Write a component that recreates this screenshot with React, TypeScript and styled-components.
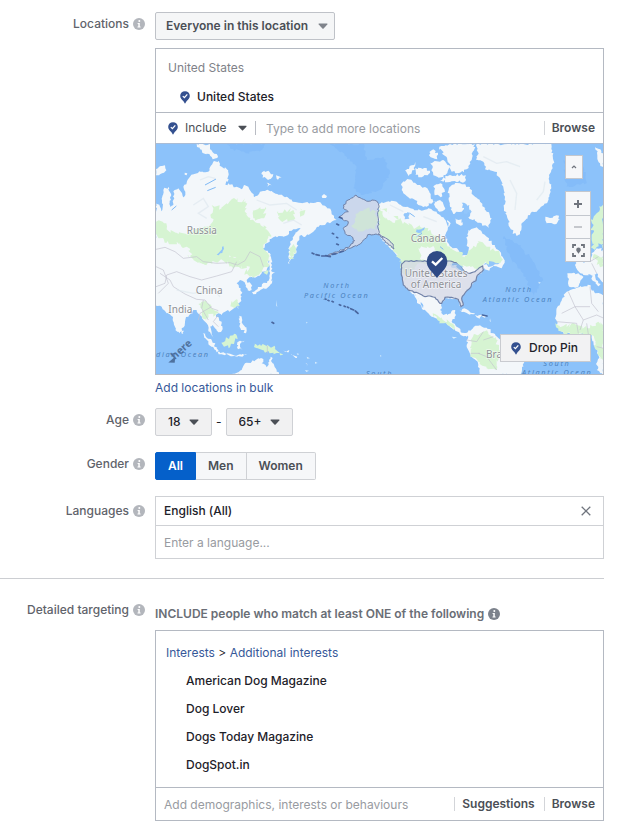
import React from "react";
import styled, { createGlobalStyle, css } from "styled-components";

const GlobalStyle = createGlobalStyle`
  *, *::before, *::after { box-sizing: border-box; }
  body { margin: 0; background: #fff; }
  body, button, input, select {
    font-family: Inter, "Liberation Sans", sans-serif;
    font-size: 12px;
    line-height: 16px;
  }
`;

/* ---------- layout ---------- */

const Page = styled.main`
  padding: 12px 18px 8px 0;
  color: #1d2129;
`;

const Row = styled.section<{ $gap?: number }>`
  display: grid;
  grid-template-columns: 145px minmax(0, 1fr);
  column-gap: 10px;
  margin-bottom: ${(p) => p.$gap ?? 16}px;
`;

const RowLabel = styled.div<{ $tall?: boolean }>`
  display: flex;
  align-items: center;
  justify-content: flex-end;
  gap: 4px;
  height: ${(p) => (p.$tall ? 30 : 24)}px;
  color: #5f636b;
  font-weight: 500;
`;

const Field = styled.div`
  min-width: 0;
`;

const Inline = styled.div`
  display: flex;
  align-items: center;
  gap: 4px;
`;

const Rule = styled.hr`
  margin: 0 0 19px;
  border: 0;
  border-top: 1px solid #ccced2;
`;

const Box = styled.div<{ $soft?: boolean }>`
  border: 1px solid ${(p) => (p.$soft ? "#cfd1d5" : "#b4b9c2")};
  background: #fff;
`;

/* ---------- controls ---------- */

const SelectWrap = styled.span<{ $kind: "tinted" | "grey" | "bare" }>`
  display: inline-grid;
  align-items: center;
  color: #4b4f56;
  select,
  svg {
    grid-area: 1 / 1;
  }
  svg {
    justify-self: end;
    pointer-events: none;
  }
  select {
    appearance: none;
    width: 100%;
    height: 28px;
    margin: 0;
    border: 1px solid transparent;
    border-radius: 2px;
    background: transparent;
    color: inherit;
    cursor: pointer;
  }
  ${(p) =>
    p.$kind === "tinted" &&
    css`
      width: 180px;
      select { background: #f5f6f7; border-color: #bfc2c8; font-weight: 600; padding: 0 10px; }
      svg { margin-right: 7px; color: #7f838b; }
    `}
  ${(p) =>
    p.$kind === "grey" &&
    css`
      color: #1d2129;
      select { background: #f1f1f2; border-color: #cfd1d5; font-weight: 500; padding: 0 30px 0 12px; }
      svg { margin-right: 13px; color: #4b4f56; }
    `}
  ${(p) =>
    p.$kind === "bare" &&
    css`
      width: 62px;
      select { padding: 0; border: 0; }
      svg { color: #4b4f56; }
    `}
`;

const TextLink = styled.a`
  color: #365899;
  text-decoration: none;
`;

const BulkRow = styled.div`
  margin-top: 5px;
`;

const TextInput = styled.input`
  flex: 1;
  min-width: 0;
  height: 30px;
  padding: 0;
  border: 0;
  outline: 0;
  background: transparent;
  color: #1d2129;
  &::placeholder { color: #989ba1; opacity: 1; }
`;

const InputBar = styled.div<{ $inset: number; $height: number }>`
  display: flex;
  align-items: center;
  height: ${(p) => p.$height}px;
  padding: 0 8px 0 ${(p) => p.$inset}px;
  border-top: 1px solid #b4b9c2;
`;

const Separator = styled.span`
  width: 1px;
  height: 14px;
  margin: 0 10px 0 8px;
  background: #b9bcc3;
`;

const TextButton = styled.button`
  padding: 0 0 0 7px;
  margin-left: 9px;
  height: 14px;
  line-height: 14px;
  border: 0;
  border-left: 1px solid #d3d5d9;
  background: none;
  color: #4b4f56;
  font-weight: 600;
  cursor: pointer;
`;

const InfoButton = styled.button<{ $dark?: boolean }>`
  display: inline-flex;
  padding: 0;
  border: 0;
  background: none;
  color: ${(p) => (p.$dark ? "#7c828c" : "#b3b6bc")};
  cursor: pointer;
`;

/* ---------- locations ---------- */

const LocationBox = styled(Box)`
  margin-top: 8px;
`;

const LocationList = styled.div`
  height: 63px;
  padding: 11px 12px 0;
`;

const GroupName = styled.div`
  color: #7f8289;
`;

const LocationItem = styled.div`
  display: flex;
  align-items: center;
  gap: 7px;
  margin-top: 13px;
  padding-left: 12px;
  font-weight: 500;
`;

const IncludeGroup = styled.div`
  display: flex;
  align-items: center;
  gap: 7px;
`;

const MapFrame = styled.div`
  position: relative;
  border-top: 1px solid #a9bcd6;
  > svg { display: block; width: 100%; height: auto; }
`;

const MapTools = styled.div`
  position: absolute;
  top: 11px;
  right: 12px;
  width: 26px;
  display: flex;
  flex-direction: column;
  gap: 12px;
`;

const ZoomGroup = styled.div`
  display: flex;
  flex-direction: column;
  border: 1px solid #c3c7ce;
`;

const MapButton = styled.button<{ $small?: boolean }>`
  display: flex;
  align-items: center;
  justify-content: center;
  width: ${(p) => (p.$small ? "18px" : "auto")};
  height: ${(p) => (p.$small ? 24 : 23)}px;
  padding: 0;
  border: ${(p) => (p.$small ? "1px solid #c3c7ce" : "0")};
  background: #f6f7f9;
  color: #70757e;
  cursor: pointer;
  & + & { border-top: 1px solid #c3c7ce; }
`;

const DropPin = styled.button`
  position: absolute;
  right: 12px;
  bottom: 12px;
  display: flex;
  align-items: center;
  gap: 8px;
  height: 28px;
  padding: 0 12px 0 10px;
  border: 1px solid #c9cbd0;
  background: #f2f2f3;
  color: #1d2129;
  font-weight: 500;
  cursor: pointer;
`;

/* ---------- gender ---------- */

const Segments = styled.fieldset`
  display: flex;
  width: fit-content;
  margin: 0;
  padding: 0;
  border: 0;
`;

const Segment = styled.label`
  display: grid;
  cursor: pointer;
  input {
    grid-area: 1 / 1;
    appearance: none;
    margin: 0;
  }
  span {
    grid-area: 1 / 1;
    height: 28px;
    padding: 5px 12px;
    border: 1px solid #cfd1d5;
    border-left-width: 0;
    background: #f6f7f9;
    color: #4b4f56;
    font-weight: 600;
  }
  &:first-of-type span { border-radius: 2px 0 0 2px; border-left-width: 1px; }
  &:last-of-type span { border-radius: 0 2px 2px 0; }
  input:checked + span { background: #0560ca; border-color: #0560ca; color: #fff; }
`;

/* ---------- languages ---------- */

const Token = styled.div`
  display: flex;
  align-items: center;
  justify-content: space-between;
  height: 28px;
  padding: 0 12px 0 8px;
  font-weight: 500;
`;

const CloseButton = styled.button`
  display: flex;
  padding: 0;
  border: 0;
  background: none;
  color: #70757e;
  cursor: pointer;
`;

const LanguageBar = styled(InputBar)`
  border-color: #cfd1d5;
`;

/* ---------- targeting ---------- */

const TargetingTitle = styled.div`
  display: flex;
  align-items: center;
  gap: 4px;
  height: 16px;
  margin: 8px 0;
  color: #6a6e76;
  font-weight: 600;
`;

const Breadcrumb = styled.nav`
  padding: 14px 10px 0;
`;

const InterestList = styled.ul`
  list-style: none;
  margin: 0;
  padding: 6px 0 8px 30px;
  font-weight: 500;
  li { line-height: 28px; }
`;

/* ---------- icons ---------- */

const Info = ({ dark, label }: { dark?: boolean; label: string }) => (
  <InfoButton type="button" $dark={dark} aria-label={label}>
    <svg width="12" height="12" viewBox="0 0 12 12">
      <circle cx="6" cy="6" r="6" fill="currentColor" />
      <circle cx="6.3" cy="3" r="1" fill="#fff" />
      <path d="M4.6 5h2.2v3.6h.8v1H4.5v-1h.8V6h-.7z" fill="#fff" />
    </svg>
  </InfoButton>
);

const Caret = ({ wide }: { wide?: boolean }) => (
  <svg width={wide ? 10 : 9} height="6" viewBox="0 0 10 6">
    <path d="M.8.6h8.4q.6.4.1 1L5.6 5.5q-.6.5-1.2 0L.7 1.600q-.5-.6.1-1z" fill="currentColor" />
  </svg>
);

const Pin = () => (
  <svg width="10" height="13" viewBox="0 0 10 13">
    <path d="M5 .3C2.200.3.2 2.300.2 4.900c0 2.300 1.600 3.500 3.100 5.200L5 12.800l1.700-2.700c1.500-1.700 3.100-2.900 3.100-5.200C9.800 2.300 7.800.3 5 .3z" fill="#34508f" />
    <path d="M2.800 5.100l1.600 1.500 2.900-3.200" fill="none" stroke="#fff" strokeWidth="1.300" />
  </svg>
);

/* ---------- world map ---------- */

type Tone = "land" | "green" | "deep" | "water";
const tones: Record<Tone, string> = { land: "#f3f7fa", green: "#d6f4d2", deep: "#84bcf9", water: "#92c6fb" };

/* Turns a coarse outline into a ragged coastline with repeatable noise. */
function coast(source: string, amp = 3): string {
  const pts = source.trim().split(/\s+/).map((p) => p.split(",").map(Number));
  let seed = pts[0][0] * 31 + pts[0][1] * 17 + pts.length;
  const rand = () => {
    seed = (seed * 9301 + 49297) % 233280;
    return seed / 233280 - 0.5;
  };
  const out: string[] = [];
  pts.forEach(([x, y], i) => {
    const [nx, ny] = pts[(i + 1) % pts.length];
    const steps = Math.max(1, Math.round(Math.hypot(nx - x, ny - y) / 6));
    for (let s = 0; s < steps; s++) {
      const k = s / steps;
      const a = s === 0 ? 0 : amp;
      out.push(`${Math.round(x + (nx - x) * k + rand() * a * 2)} ${Math.round(y + (ny - y) * k + rand() * a * 2)}`);
    }
  });
  return `M${out.join("L")}Z`;
}

const shapes: [Tone, string][] = [
  ["deep", "230,12 345,12 335,30 290,40 250,28"],
  ["deep", "540,12 640,12 650,60 700,50 720,100 690,150 640,165 610,145 620,80 590,50"],
  ["deep", "1060,290 1100,310 1140,350 1180,420 1150,470 1120,400 1080,350"],
  ["deep", "1240,60 1300,80 1310,130 1250,140"],
  // Eurasia
  ["land", "18,190 30,200 38,218 36,190 40,150 55,140 62,160 60,205 70,195 74,150 85,145 100,172 106,165 100,140 120,110 150,95 175,95 190,65 205,62 215,80 235,90 236,118 215,140 235,130 255,142 275,148 282,135 295,140 305,158 312,172 330,155 350,150 382,162 410,170 440,187 480,188 505,186 535,205 560,240 545,245 510,255 490,275 460,290 455,285 442,305 440,335 425,355 418,372 418,320 428,292 452,264 425,272 400,290 370,292 350,310 338,325 355,338 360,375 350,390 335,400 318,412 300,412 290,420 303,432 305,450 292,450 285,430 270,420 260,430 272,445 275,470 265,490 245,510 222,517 215,525 205,520 198,530 215,550 218,567 205,577 195,565 188,555 180,560 185,580 190,595 175,570 170,550 160,540 150,525 140,510 130,510 115,530 105,545 95,565 90,580 82,575 70,545 62,525 50,520 42,510 30,497 10,493"],
  ["land", "92,566 102,572 100,582 94,580"],
  ["land", "140,12 180,12 184,30 200,42 202,54 188,58 178,42 160,40 150,28"],
  ["land", "18,88 45,76 46,94 18,106"],
  ["land", "104,98 112,100 110,106 104,104"],
  ["land", "336,97 355,92 370,103 358,118 338,113"],
  ["land", "378,106 396,112 384,119"],
  ["land", "350,128 365,136 352,140"],
  ["land", "515,168 522,162 531,168 528,174 517,174"],
  // East and south-east Asia islands
  ["land", "355,340 362,342 366,375 362,395 357,370"],
  ["land", "355,388 375,396 366,403 366,430 345,446 320,457 310,463 306,456 335,440 352,424 358,408"],
  ["land", "262,500 267,498 265,508"],
  ["land", "268,527 276,530 278,552 290,570 288,580 272,566 268,548"],
  ["land", "158,580 185,600 206,632 200,637 175,610"],
  ["land", "203,635 240,641 262,646 290,643 262,650 215,643"],
  ["green", "220,607 240,587 258,583 252,612 236,625 222,620"],
  ["land", "262,607 284,602 270,612 278,630 264,628"],
  ["green", "310,610 330,613 350,618 376,625 397,645 370,643 345,638 320,625"],
  ["land", "400,632 418,630 412,637"],
  ["land", "420,640 442,650 440,654"],
  ["land", "246,705 275,690 285,670 305,665 325,655 340,657 335,670 350,682 358,665 362,650 368,670 380,690 388,705"],
  ["land", "466,668 472,672 470,680"],
  // Asian forests
  ["green", "18,245 42,250 50,268 110,285 135,268 170,264 190,240 185,195 215,205 245,178 290,182 285,215 300,240 330,250 350,262 362,290 340,316 354,340 358,374 335,398 300,410 285,396 300,380 270,375 250,350 215,350 205,362 150,372 130,360 110,320 80,305 50,308 18,282"],
  ["green", "308,212 345,200 342,235 315,242"],
  ["green", "385,215 430,210 436,235 392,242"],
  ["green", "452,205 466,210 462,225 450,222"],
  ["green", "420,320 438,312 434,345 422,358"],
  ["green", "112,345 160,350 250,345 290,380 250,385 220,362 150,368"],
  ["green", "145,492 170,487 185,505 205,520 190,530 178,522 168,542 155,522"],
  ["green", "244,487 264,480 262,497 246,500"],
  ["green", "340,398 356,392 350,405"],
  ["water", "220,318 222,326 206,346 200,344"],
  // North America
  ["land", "685,190 710,185 740,185 755,198 790,207 815,212 835,205 860,215 880,232 890,250 893,270 886,290 895,310 905,322 925,330 935,350 945,345 955,338 952,300 955,270 980,262 998,282 1010,290 1025,310 1045,330 1058,350 1064,368 1055,385 1030,378 1018,392 1000,382 995,400 980,410 970,430 962,440 948,455 935,475 940,495 933,500 925,480 900,475 885,474 875,490 870,510 880,525 903,520 915,510 918,525 905,545 920,560 935,578 955,576 950,590 930,582 910,568 870,540 845,530 825,510 795,460 780,455 765,442 756,420 755,390 758,365 740,345 725,330 705,305 685,285"],
  ["water", "1000,374 1030,360 1050,368 1020,380"],
  ["land", "785,462 794,460 825,508 820,510"],
  ["green", "686,200 710,215 740,228 760,250 800,262 840,270 860,290 885,305 900,325 925,335 945,352 960,330 985,305 1010,320 1050,345 1055,362 1030,365 1000,372 985,390 950,380 900,375 850,385 820,370 800,375 770,420 757,400 756,365 730,332 700,290 686,282"],
  ["land", "805,325 850,318 862,350 850,365 815,360"],
  ["land", "690,205 715,215 745,240 735,248 700,230"],
  ["green", "848,520 872,535 905,548 915,566 890,552 862,540"],
  ["water", "800,268 825,262 815,278 798,276"],
  ["water", "760,225 780,218 778,236 764,238"],
  ["water", "900,372 925,374 938,386 928,392 912,384"],
  // Arctic archipelago
  ["land", "755,130 775,118 790,128 810,135 835,150 842,170 850,185 830,200 805,195 795,180 775,172 760,160"],
  ["land", "765,92 785,76 796,66 794,90 776,108"],
  ["land", "795,85 830,84 840,100 815,112 796,104"],
  ["land", "838,36 850,28 864,44 862,58 842,52"],
  ["land", "842,68 880,60 900,80 880,112 850,106"],
  ["land", "850,140 872,130 884,150 872,172 854,166"],
  ["land", "868,20 900,12 975,12 965,60 950,88 930,98 905,95 892,60"],
  ["land", "900,105 948,106 946,124 900,126 870,120"],
  ["land", "896,150 905,135 930,130 955,140 965,160 990,185 1010,215 1025,235 1016,265 995,250 975,242 955,232 960,215 945,205 935,215 910,222 900,200"],
  ["land", "850,185 870,180 886,205 868,215"],
  ["land", "915,235 935,238 938,255 918,250"],
  ["land", "892,240 902,250 895,262"],
  ["water", "935,188 958,195 965,215 942,220"],
  // Greenland, Iceland
  ["land", "980,12 985,38 978,60 1000,65 1005,88 1035,95 1050,115 1060,140 1064,180 1062,205 1075,240 1082,268 1100,288 1110,275 1115,250 1140,225 1170,205 1190,190 1198,170 1204,145 1198,110 1208,85 1210,60 1204,12"],
  ["land", "1186,230 1200,234 1220,226 1230,240 1216,253 1190,250"],
  // Caribbean and South America
  ["land", "928,510 950,508 975,522 960,524 940,516"],
  ["land", "975,525 1000,526 1008,531 980,532"],
  ["land", "948,578 985,557 1010,563 1030,580 1052,600 1080,620 1117,635 1124,662 1116,690 1110,705 988,705 984,670 962,645 950,615 955,590"],
  ["green", "960,600 1000,575 1040,600 1050,640 1040,690 1010,685 985,665 962,640"],
  // Europe and Africa
  ["land", "1335,20 1362,40 1362,85 1350,70"],
  ["green", "1362,190 1340,220 1326,250 1325,300 1330,330 1345,310 1362,325"],
  ["land", "1275,362 1320,365 1325,340 1340,325 1362,330 1362,430 1348,415 1340,400 1325,405 1300,405 1282,390 1275,375"],
  ["land", "1252,400 1285,400 1300,410 1285,440 1256,438"],
  ["green", "1330,345 1362,350 1362,378 1340,375"],
  ["land", "1322,405 1330,402 1352,432 1344,438"],
  ["land", "1250,455 1280,443 1322,436 1326,452 1362,465 1362,710 1340,690 1345,645 1325,585 1300,580 1270,582 1240,580 1225,560 1215,535 1220,505 1235,480"],
  ["green", "1216,550 1240,558 1280,555 1320,565 1345,545 1362,560 1362,670 1345,645 1325,585 1240,580"],
];

const borders =
  "M18 328L45 322L75 335L100 355L140 350L160 365L200 370L240 368L262 375L285 362L300 335L330 350L340 380M30 400L60 420L70 440L105 462L140 478L165 480L185 505L205 512M18 440L45 430L50 405L80 395L120 410L155 420L200 408L245 395L260 365M18 380L40 390L55 430L25 460M160 480L155 505L175 540M145 540L150 520L185 500M205 525L190 545L205 560M352 617L352 640M140 640L160 645M950 600L980 605L1000 575M1000 600L1030 590M985 640L1010 650L1040 690M962 640L990 640M1255 455L1275 500L1235 520M1275 500L1300 540L1340 525L1362 535M1300 540L1290 570M1320 440L1325 490L1345 515M1220 545L1280 550L1285 580M1310 550L1315 582M1275 500L1320 500M1325 370L1340 400M1320 365L1345 350M1340 620L1362 625";

const alaska =
  "618,165 645,180 680,183 685,190 685,283 700,290 715,300 730,316 732,327 715,315 690,285 660,283 640,300 620,318 600,325 560,340 530,348 560,336 600,318 614,302 605,290 590,285 580,265 595,245 580,240 568,230 582,220 595,215 580,205 580,195 600,178";
const lower48 =
  "755,372 765,363 900,363 918,368 935,385 945,395 960,400 975,395 988,383 998,378 1000,390 982,406 978,422 965,430 962,442 948,455 935,475 940,495 933,500 925,478 905,472 885,472 875,490 870,490 855,472 840,468 825,470 810,462 775,450 760,435 754,400";

const WorldMap = () => (
  <svg viewBox="18 12 1341 690" role="img" aria-label="World map with the United States selected">
    <rect x="18" y="12" width="1341" height="690" fill="#8cc2fa" />
    {shapes.map(([tone, pts], i) => (
      <path key={i} d={coast(pts, tone === "green" ? 7 : 4)} fill={tones[tone]} />
    ))}
    <path d={borders} fill="none" stroke="#c2c3cf" strokeWidth="2" />
    <g fill="none" stroke="#e0e9f0" strokeWidth="4" opacity=".7">
      <path d="M130 195l30-20 15 25-30 20 25 15M150 120l25-10 20 5M320 180l40 15 50-5 30 20M400 250l30-10 25 15M1000 50l40 20 30-5 40 15M1160 180l20-25 5-30M1080 120l20 40-5 50" />
      <path d="M80 450l50 10 60-10 20 20M720 195l40 20M820 230l40 15" />
    </g>
    <g fill="none" stroke="#7fb9f5" strokeWidth="3">
      <path d="M165 135l15-8 18-10M172 152l25-10M65 210l14-12M780 220l14 10M800 290l16-10M870 320l10 8" />
    </g>
    <g fill="#d8edfd">
      <path d="M470 545l3 4-5 1zM440 640l8 2-5 3zM470 650l10 5-8 1zM495 665l8 4-8 2zM465 690l12 2-8 4zM690 645l5 3-4 2zM905 590l16 2-10 4zM1165 425l8 3-6 3zM1020 535l3 12-4-4zM378 480l4 20-3-2z" />
    </g>
    <path d={coast(alaska, 3)} fill="#dcdce8" fillOpacity=".78" stroke="#7182a8" strokeWidth="3" />
    <path d={coast("615,225 650,205 680,215 680,270 650,265 625,275 605,260", 7)} fill="#cfe7d3" opacity=".8" />
    <path d={coast(lower48, 1)} fill="#d6d8e6" fillOpacity=".75" stroke="#7182a8" strokeWidth="3.500" />
    <path d="M906 374q18-8 28 14M920 378l18 14" fill="none" stroke="#8db8e8" strokeWidth="6" />
    <path d="M486 339l6 3M498 344l10 2M515 348h10M527 347l14 3M548 343l10-2M570 337l10-4M560 252l6 3M547 280l4 2M560 292l3 1M568 232l8 3M560 312l5 2M526 477l2 1M534 481l3 1M546 484l4 2M568 494l4 2M582 498l4 2M592 501l4 2M602 506l9 4M616 513l8 7M366 547l5 3M997 525l14 3" stroke="#49669e" strokeWidth="5" strokeLinecap="round" />
    <g fontFamily='"Noto Sans", "Open Sans", sans-serif' fontSize="30" fill="#8d9096" stroke="#fff" strokeWidth="4" strokeOpacity=".6" paintOrder="stroke">
      <text x="110" y="282">Russia</text>
      <text x="137" y="462">China</text>
      <text x="55" y="518">India</text>
      <text x="782" y="307">Canada</text>
      <text x="764" y="410">United States</text>
      <text x="782" y="444">of America</text>
      <text x="1008" y="653">Brazil</text>
    </g>
    <g fontFamily='"Noto Sans", "Open Sans", sans-serif' fontSize="22" fontStyle="italic" fill="#4c83c0" letterSpacing="5">
      <text x="520" y="443">North</text>
      <text x="462" y="475">Pacific Ocean</text>
      <text x="1066" y="455">North</text>
      <text x="998" y="485">Atlantic Ocean</text>
      <text x="1180" y="677">South</text>
      <text x="1116" y="706">Atlantic Ocean</text>
      <text x="648" y="708">South</text>
      <text x="18" y="650">dian Ocean</text>
    </g>
    <g transform="rotate(-42 90 635)" fill="#44648f" opacity=".85">
      <text x="62" y="643" fontFamily='"Open Sans", sans-serif' fontSize="31" fontWeight="700">here</text>
      <path d="M42 636l14 13 14-13z" />
    </g>
    <path d="M861 333a31 31 0 0 0-31 31c0 20 14 29 31 50 17-21 31-30 31-50a31 31 0 0 0-31-31z" fill="#2f4a85" />
    <path d="M846 364l11 10 20-20" fill="none" stroke="#fff" strokeWidth="7" />
  </svg>
);

/* ---------- page ---------- */

const interests = ["American Dog Magazine", "Dog Lover", "Dogs Today Magazine", "DogSpot.in"];

export default function App() {
  return (
    <>
      <GlobalStyle />
      <Page>
        <Row $gap={12}>
          <RowLabel>
            <label htmlFor="audience">Locations</label>
            <Info label="About locations" />
          </RowLabel>
          <Field>
            <SelectWrap $kind="tinted">
              <select id="audience">
                <option>Everyone in this location</option>
              </select>
              <Caret wide />
            </SelectWrap>
            <LocationBox>
              <LocationList>
                <GroupName>United States</GroupName>
                <LocationItem>
                  <Pin />
                  United States
                </LocationItem>
              </LocationList>
              <InputBar $inset={12} $height={31}>
                <IncludeGroup>
                  <Pin />
                  <SelectWrap $kind="bare">
                    <select aria-label="Include or exclude">
                      <option>Include</option>
                    </select>
                    <Caret />
                  </SelectWrap>
                </IncludeGroup>
                <Separator />
                <TextInput aria-label="Add locations" placeholder="Type to add more locations" />
                <TextButton type="button">Browse</TextButton>
              </InputBar>
              <MapFrame>
                <WorldMap />
                <MapTools>
                  <MapButton $small type="button" aria-label="Collapse map">
                    <svg width="6" height="4" viewBox="0 0 6 4">
                      <path d="M1 3l2-2 2 2" fill="none" stroke="currentColor" strokeWidth="1.200" />
                    </svg>
                  </MapButton>
                  <ZoomGroup>
                    <MapButton type="button" aria-label="Zoom in">
                      <svg width="8" height="8" viewBox="0 0 8 8">
                        <path d="M4 0v8M0 4h8" stroke="currentColor" strokeWidth="2" />
                      </svg>
                    </MapButton>
                    <MapButton type="button" aria-label="Zoom out">
                      <svg width="8" height="8" viewBox="0 0 8 8">
                        <path d="M0 4h8" stroke="#b4b7bd" strokeWidth="1.500" />
                      </svg>
                    </MapButton>
                    <MapButton type="button" aria-label="Centre map">
                      <svg width="13" height="13" viewBox="0 0 13 13">
                        <path d="M1 4V1h3M9 1h3v3M12 9v3H9M4 12H1V9" fill="none" stroke="currentColor" strokeWidth="1.800" />
                        <path d="M6.500 3.500a2.300 2.300 0 0 0-2.300 2.300c0 1.500 1.100 2 2.300 4 1.200-2 2.300-2.500 2.300-4a2.300 2.300 0 0 0-2.300-2.300z" fill="currentColor" />
                      </svg>
                    </MapButton>
                  </ZoomGroup>
                </MapTools>
                <DropPin type="button">
                  <Pin />
                  Drop Pin
                </DropPin>
              </MapFrame>
            </LocationBox>
            <BulkRow>
              <TextLink href="#bulk">Add locations in bulk</TextLink>
            </BulkRow>
          </Field>
        </Row>

        <Row>
          <RowLabel>
            <label htmlFor="age-from">Age</label>
            <Info label="About age" />
          </RowLabel>
          <Inline>
            <SelectWrap $kind="grey">
              <select id="age-from">
                <option>18</option>
              </select>
              <Caret wide />
            </SelectWrap>
            -
            <SelectWrap $kind="grey">
              <select aria-label="Maximum age">
                <option>65+</option>
              </select>
              <Caret wide />
            </SelectWrap>
          </Inline>
        </Row>

        <Row>
          <RowLabel>
            <span id="gender-label">Gender</span>
            <Info label="About gender" />
          </RowLabel>
          <Field>
            <Segments aria-labelledby="gender-label">
              {["All", "Men", "Women"].map((name, i) => (
                <Segment key={name}>
                  <input type="radio" name="gender" defaultChecked={i === 0} />
                  <span>{name}</span>
                </Segment>
              ))}
            </Segments>
          </Field>
        </Row>

        <Row $gap={19}>
          <RowLabel $tall>
            <label htmlFor="language">Languages</label>
            <Info label="About languages" />
          </RowLabel>
          <Box $soft>
            <Token>
              English (All)
              <CloseButton type="button" aria-label="Remove English (All)">
                <svg width="10" height="10" viewBox="0 0 10 10">
                  <path d="M.7.7l8.600 8.600M9.300.7L.7 9.300" stroke="currentColor" strokeWidth="1.300" />
                </svg>
              </CloseButton>
            </Token>
            <LanguageBar $inset={8} $height={33}>
              <TextInput id="language" placeholder="Enter a language..." />
            </LanguageBar>
          </Box>
        </Row>

        <Rule />

        <Row $gap={0}>
          <RowLabel>
            <label htmlFor="targeting">Detailed targeting</label>
            <Info label="About detailed targeting" />
          </RowLabel>
          <Field>
            <TargetingTitle>
              INCLUDE people who match at least ONE of the following
              <Info dark label="About matching" />
            </TargetingTitle>
            <Box>
              <Breadcrumb aria-label="Interest category">
                <TextLink href="#interests">Interests</TextLink> &gt;{" "}
                <TextLink href="#additional">Additional interests</TextLink>
              </Breadcrumb>
              <InterestList>
                {interests.map((name) => (
                  <li key={name}>{name}</li>
                ))}
              </InterestList>
              <InputBar $inset={8} $height={33}>
                <TextInput id="targeting" placeholder="Add demographics, interests or behaviours" />
                <TextButton type="button">Suggestions</TextButton>
                <TextButton type="button">Browse</TextButton>
              </InputBar>
            </Box>
          </Field>
        </Row>
      </Page>
    </>
  );
}
